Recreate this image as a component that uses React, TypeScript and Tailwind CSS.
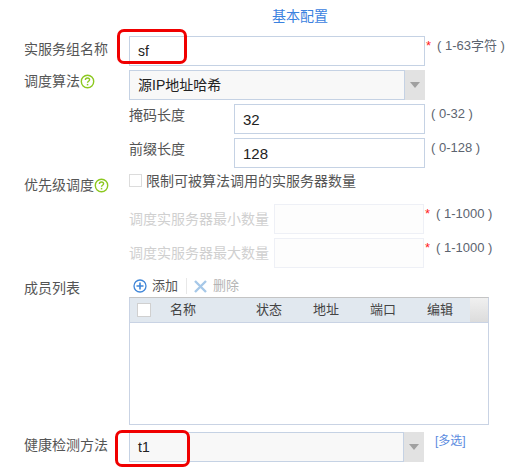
const font = { fontFamily: '"Liberation Sans", "Noto Sans CJK SC", sans-serif' };

function HelpIcon() {
    return (
        <svg width="15" height="15" viewBox="0 0 15 15" fill="none" className="shrink-0">
            <circle cx="7.5" cy="7.5" r="6.2" stroke="#8cc820" strokeWidth="1.4" />
            <path d="M5.4 6c0-1.4 1-2 2.1-2s2.1.7 2.1 1.8c0 1.5-2.1 1.5-2.1 3" stroke="#8cc820" strokeWidth="1.4" />
            <rect x="6.8" y="9.9" width="1.5" height="1.5" fill="#8cc820" />
        </svg>
    );
}

function Arrow() {
    return (
        <div className="w-5 h-full bg-[#e2e2e2] flex items-center justify-center shrink-0">
            <svg width="10" height="6" viewBox="0 0 10 6">
                <path d="M0 0h10L5 6z" fill="#a0a0a0" />
            </svg>
        </div>
    );
}

function Label({ children, top = 'pt-0' }: { children: React.ReactNode; top?: string }) {
    return <div className={`w-[105px] shrink-0 flex items-start gap-0 text-[14px] leading-[20px] text-[#555] ${top}`}>{children}</div>;
}

function Hint({ required, text }: { required?: boolean; text: string }) {
    return (
        <div className="flex items-start text-[13px] leading-[20px] text-[#5c6470] ml-px h-full">
            {required ? <span className="text-[#ff2020] w-[9px]">*</span> : <span className="w-[3px]" />}
            <span className="whitespace-pre ml-[2px]">{text}</span>
        </div>
    );
}

export default function App() {
    return (
        <div className="relative w-[517px] h-[471px] bg-white overflow-hidden pl-6" style={font}>
            <div className="h-9 pl-[248px] pt-[6px] text-[14px] leading-[20px] text-[#3b82e0]">基本配置</div>

            <div className="flex h-[30px] mb-1">
                <Label top="pt-[3px]">实服务组名称</Label>
                <div className="w-[296px] h-[30px] border border-[#c5d2e4] bg-white px-2 text-[14px] leading-[28px] text-[#222] shrink-0">sf</div>
                <Hint required text="( 1-63字符 )" />
            </div>

            <div className="flex h-[30px] mb-1">
                <Label top="pt-[1px]">
                    调度算法
                    <span className="mt-[3px]"><HelpIcon /></span>
                </Label>
                <div className="flex w-[296px] h-[30px] shrink-0">
                    <div className="flex-1 border border-[#c5d2e4] bg-[#f8f8f8] px-2 text-[14px] leading-[28px] text-[#222]">源IP地址哈希</div>
                    <Arrow />
                </div>
            </div>

            <div className="flex h-[30px] mb-1 pl-[105px]">
                <div className="w-[105px] text-[14px] leading-[20px] text-[#555] pt-[1px]">掩码长度</div>
                <div className="w-[191px] h-[30px] border border-[#c5d2e4] px-2 text-[15px] leading-[30px] text-[#222] shrink-0">32</div>
                <Hint text="( 0-32 )" />
            </div>

            <div className="flex h-[30px] mb-[6px] pl-[105px]">
                <div className="w-[105px] text-[14px] leading-[20px] text-[#555] pt-[1px]">前缀长度</div>
                <div className="w-[191px] h-[30px] border border-[#c5d2e4] px-2 text-[15px] leading-[30px] text-[#222] shrink-0">128</div>
                <Hint text="( 0-128 )" />
            </div>

            <div className="flex h-[26px] mb-1">
                <Label top="pt-[1px]">
                    优先级调度
                    <span className="mt-[3px]"><HelpIcon /></span>
                </Label>
                <div className="flex items-start text-[14px] leading-[14px] text-[#555]">
                    <span className="w-[13px] h-[13px] border border-[#dcdcdc] bg-white mr-[4px]" />
                    限制可被算法调用的实服务器数量
                </div>
            </div>

            <div className="flex h-[30px] mb-1 pl-[105px]">
                <div className="w-[145px] text-[14px] leading-[20px] text-[#d0d0d0] whitespace-nowrap pt-[5px]">调度实服务器最小数量</div>
                <div className="w-[150px] h-[30px] border border-[#eef0f6] bg-[#fdfdfd] shrink-0" />
                <Hint required text="( 1-1000 )" />
            </div>

            <div className="flex h-[30px] mb-[10px] pl-[105px]">
                <div className="w-[145px] text-[14px] leading-[20px] text-[#d0d0d0] whitespace-nowrap pt-[5px]">调度实服务器最大数量</div>
                <div className="w-[150px] h-[30px] border border-[#eef0f6] bg-[#fdfdfd] shrink-0" />
                <Hint required text="( 1-1000 )" />
            </div>

            <div className="flex">
                <Label top="pt-[-1px]">成员列表</Label>
                <div className="w-[360px] shrink-0">
                    <div className="flex items-center h-4 mb-[3px] pl-1 text-[13px] text-[#555]">
                        <svg width="14" height="14" viewBox="0 0 14 14" fill="none" className="mr-[5px]">
                            <circle cx="7" cy="7" r="6" stroke="#3f86d8" strokeWidth="1.3" />
                            <path d="M7 3.5v7M3.5 7h7" stroke="#3f86d8" strokeWidth="1.6" />
                        </svg>
                        添加
                        <span className="w-px h-4 bg-[#e8e8e8] mx-2" />
                        <svg width="13" height="13" viewBox="0 0 13 13" fill="none" className="mr-[6px] -ml-[1px]">
                            <path d="M1 1l11 11M12 1L1 12" stroke="#a6c8e8" strokeWidth="2.4" />
                        </svg>
                        <span className="text-[#b4b4b4]">删除</span>
                    </div>
                    <div className="h-[128px] border border-[#c9d3e4] border-t-[#c4c4c4]">
                        <div className="flex items-center h-[25px] bg-[#e1e8ef] border-b border-[#c9d3e4] text-[13px] text-[#444]">
                            <div className="w-[40px] pl-[7px]"><div className="w-[14px] h-[14px] bg-white border border-[#d0d0d0]" /></div>
                            <div className="w-[86px]">名称</div>
                            <div className="w-[57px]">状态</div>
                            <div className="w-[57px]">地址</div>
                            <div className="w-[57px]">端口</div>
                            <div className="flex-1">编辑</div>
                            <div className="w-[18px] h-full bg-gradient-to-b from-[#f0f0f0] to-[#dcdcdc]" />
                        </div>
                    </div>
                </div>
            </div>

            <div className="flex h-[30px] mt-[7px]">
                <Label top="pt-[3px]">健康检测方法</Label>
                <div className="flex w-[295px] h-[30px] shrink-0">
                    <div className="flex-1 border border-[#c5d2e4] bg-[#f8f8f8] px-2 text-[14px] leading-[28px] text-[#222]">t1</div>
                    <Arrow />
                </div>
                <div className="ml-[11px] text-[12px] leading-[18px] text-[#5a8ae0]">[多选]</div>
            </div>

            {/* red highlight boxes drawn over the form */}
            <div className="absolute left-[117px] top-[29px] w-[70px] h-[35px] border-[3px] border-[#f00000] rounded-[7px]" />
            <div className="absolute left-[115px] top-[430px] w-[75px] h-[37px] border-[3px] border-[#f00000] rounded-[7px]" />
        </div>
    );
}
